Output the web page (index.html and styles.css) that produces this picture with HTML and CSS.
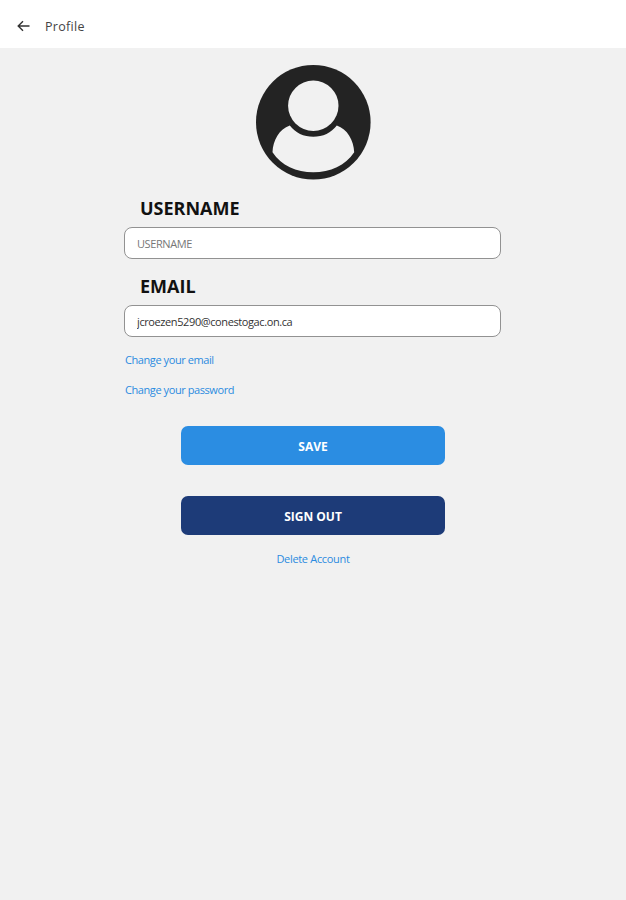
FILE: index.html
```html
<!DOCTYPE html>
<html lang="en">
<head>
<meta charset="utf-8">
<title>Profile</title>
<link rel="stylesheet" href="styles.css">
</head>
<body>
<header class="topbar">
  <svg class="back" viewBox="0 0 14 12" width="14" height="12" aria-hidden="true"><path d="M12.500 6H1.500M6 1.200L1.200 6l4.800 4.800"/></svg>
  <h1 class="title">Profile</h1>
</header>
<main class="profile">
  <svg class="avatar" viewBox="0 0 116 116" width="116" height="116" aria-hidden="true">
    <circle class="ink" cx="58.300" cy="58.200" r="57.300"/>
    <circle class="paper" cx="58.300" cy="41.700" r="25.200"/>
    <path class="paper" d="M34.800 61.400C24.300 65 18 76 17.500 88.200C26.300 101.500 41.300 108.200 58.300 108.200S90.300 101.500 99.200 88.200C98.700 76 92.300 65 81.800 61.400C76.300 68.700 67.800 72.700 58.300 72.700S40.300 68.700 34.800 61.400Z"/>
  </svg>
  <form class="form">
    <label class="label label-user" for="username">USERNAME</label>
    <input class="field" id="username" type="text" placeholder="USERNAME">
    <label class="label label-email" for="email">EMAIL</label>
    <input class="field field-email" id="email" type="text" value="jcroezen5290@conestogac.on.ca">
    <a class="link change-email">Change your email</a>
    <a class="link change-password">Change your password</a>
    <button class="button save" type="button">SAVE</button>
    <button class="button signout" type="button">SIGN OUT</button>
    <a class="link delete">Delete Account</a>
  </form>
</main>
</body>
</html>
```
FILE: styles.css
```css
* { box-sizing: border-box; }
body {
  margin: 0;
  min-height: 900px;
  background: #f1f1f1;
  font-family: "Open Sans", "Noto Sans", sans-serif;
}
.topbar {
  display: flex;
  align-items: center;
  height: 48px;
  padding: 6px 17px 0;
  gap: 14px;
  background: #fff;
}
.back {
  fill: none;
  stroke: #333;
  stroke-width: 1.4;
  margin-top: -3px;
}
.title {
  margin: 0;
  font-size: 12.5px;
  font-weight: 400;
  line-height: 18px;
  letter-spacing: 0.3px;
  color: #444;
}
.profile {
  display: flex;
  flex-direction: column;
  align-items: center;
  padding-top: 16px;
}
.avatar { display: block; }
.ink { fill: #232323; }
.paper { fill: #f1f1f1; }
.form {
  display: flex;
  flex-direction: column;
  width: 378px;
  margin-top: 16px;
}
.label {
  padding-left: 16px;
  height: 24px;
  line-height: 24px;
  font-size: 18px;
  font-weight: 700;
  color: #111;
}
.label-email { margin-top: 15px; }
.field {
  width: 377px;
  height: 32px;
  margin-top: 7px;
  padding: 0 12px;
  border: 1px solid #929292;
  border-radius: 8px;
  background: #fff;
  font-family: inherit;
  font-size: 11px;
  letter-spacing: -0.4px;
  color: #333;
}
.field::placeholder { color: #777; opacity: 1; }
.link {
  height: 16px;
  padding-left: 1px;
  line-height: 16px;
  font-size: 11px;
  letter-spacing: -0.42px;
  color: #2b8be0;
}
.change-email { margin-top: 15px; }
.change-password { margin-top: 14px; }
.button {
  align-self: center;
  width: 264px;
  height: 39px;
  padding: 2px 0 0;
  border: 0;
  border-radius: 7px;
  font-family: inherit;
  font-size: 12px;
  font-weight: 700;
  color: #fff;
}
.save { margin-top: 28px; background: #2b8de2; }
.signout { margin-top: 31px; background: #1d3b78; }
.delete { align-self: center; margin-top: 16px; padding-left: 0; letter-spacing: -0.32px; }
```
